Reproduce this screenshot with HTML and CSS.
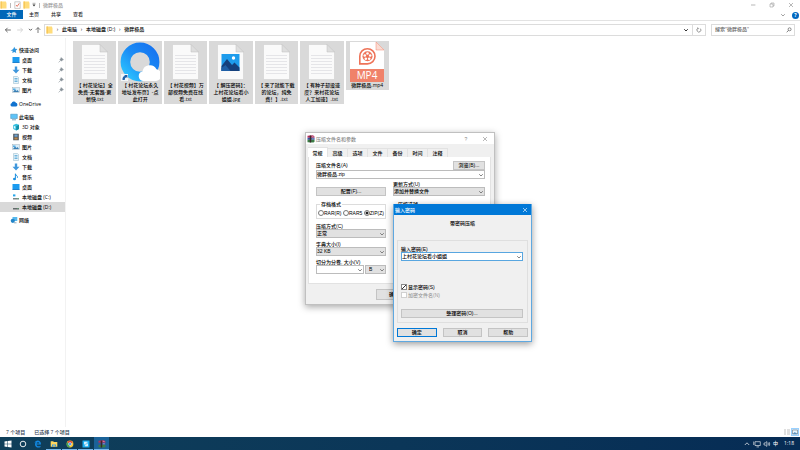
FILE: index.html
```html
<!DOCTYPE html>
<html lang="zh-CN">
  <head>
    <meta charset="UTF-8" />
    <meta name="viewport" content="width=device-width, initial-scale=1.0" />
    <title>微胖极品</title>
    <link rel="stylesheet" href="styles.css">
  </head>
  <body>
    <!-- shared icons -->
    <svg class="defs" aria-hidden="true">
      <linearGradient id="gBlue" x1="0" y1="1" x2="1" y2="0">
        <stop offset="0" stop-color="#2cc3ff" />
        <stop offset="0.5" stop-color="#1a8cf5" />
        <stop offset="1" stop-color="#1673f0" />
      </linearGradient>
      <symbol id="folder" viewBox="0 0 7 8">
        <path d="M0.5 0.5h5.5v1h0.5v6h-6z" fill="#ffdc7a" />
        <path d="M0.5 0.5h1.5v7h-1.5z" fill="#f7c85a" />
      </symbol>
      <symbol id="chev" viewBox="0 0 6 6">
        <path d="M1.2 2.2l1.8 1.8l1.8-1.8" fill="none" stroke="currentColor" stroke-width="0.8" />
      </symbol>
      <symbol id="close" viewBox="0 0 6 6">
        <path d="M1 1l4 4M5 1l-4 4" stroke="currentColor" stroke-width="0.6" />
      </symbol>
      <symbol id="pin" viewBox="0 0 6 6">
        <path d="M3.2 0.6l2.2 2.2l-1 0.2l-1 1.2l-1.6-1.6l1.2-1zM2.2 3.8l-1.6 1.6" fill="#8a939b" stroke="#8a939b" stroke-width="0.6" />
      </symbol>
      <symbol id="desktop" viewBox="0 0 8 8">
        <rect x="0.5" y="1" width="7" height="5.6" fill="#1b9bf0" />
        <path d="M0.5 6h7v0.8h-7z" fill="#0a6fc2" />
      </symbol>
      <symbol id="download" viewBox="0 0 8 8">
        <path d="M2.8 0.5h2.4v3.3h2.3l-3.5 3.7l-3.5-3.7h2.3z" fill="#3f97dc" />
      </symbol>
      <symbol id="doc" viewBox="0 0 8 8">
        <path d="M1.5 0.5h4l1 1v6h-5z" fill="#e9f4fa" stroke="#8fb4c8" stroke-width="0.5" />
        <path d="M2.5 2.5h3M2.5 4h3M2.5 5.5h3" stroke="#3e9ad0" stroke-width="0.7" />
      </symbol>
      <symbol id="picture" viewBox="0 0 8 8">
        <rect x="0.6" y="1.6" width="6.8" height="4.8" fill="#d9edf8" stroke="#9fb0bb" stroke-width="0.5" />
        <path d="M1 6l2-2.4l1.5 1.3l1-0.8l1.5 1.9z" fill="#3a7fb5" />
        <path d="M1 2.5h2.5v1.5h-2.5z" fill="#55aee6" />
      </symbol>
      <symbol id="drive" viewBox="0 0 8 8">
        <path d="M1 5h6v1.5h-6z" fill="#63696b" />
        <path d="M5.3 5.5h1.2v0.6h-1.2z" fill="#5fe07a" />
      </symbol>
      <symbol id="txt" viewBox="0 0 27 36">
        <path d="M0.5 0.5h18.5l7.5 7.5v27.5h-26z" fill="#fafafa" stroke="#d0d0d0" stroke-width="0.6" />
        <path d="M19 0.5v7.5h7.5z" fill="#dedede" stroke="#bdbdbd" stroke-width="0.5" />
        <path d="M3 11.5h21M3 14.5h21M3 17.5h21M3 20.5h21M3 23.5h21M3 26.5h21M3 29.5h21" stroke="#e2e2e5" stroke-width="0.9" />
      </symbol>
      <symbol id="rar" viewBox="0 0 8 8">
        <path d="M0.5 0.8l5.5-0.5l1.5 1.2v1.3h-7z" fill="#b5305f" />
        <path d="M0.5 2.8h7v2h-7z" fill="#3555a8" />
        <path d="M0.5 4.8h7v2l-1 0.8l-6-0.4z" fill="#3c7d46" />
        <path d="M2.7 0.5h1.5v7h-1.5z" fill="#3c2a2a" />
        <path d="M4.8 1.2l1.8 0.5M4.8 3.8h2" stroke="#e8d6da" stroke-width="0.5" />
      </symbol>
    </svg>

    <div class="explorer">
      <header class="titlebar">
        <svg class="ico"><use href="#folder" /></svg>
        <span class="sep"></span>
        <svg class="ico" viewBox="0 0 7 8"><path d="M0.8 0.8h5.4v6.6h-5.4z" fill="#fff" stroke="#999" stroke-width="0.5" /><path d="M2 4l1.2 1.4l2-3" fill="none" stroke="#e0573c" stroke-width="0.8" /></svg>
        <svg class="ico"><use href="#folder" /></svg>
        <svg class="caret" viewBox="0 0 4 6"><path d="M0.5 2.5h3l-1.5 2z" fill="#333" /><path d="M0.5 1.3h3" stroke="#333" stroke-width="0.4" /></svg>
        <span class="sep"></span>
        <span class="title-text">微胖极品</span>
        <div class="window-btns">
          <button aria-label="最小化"><svg viewBox="0 0 6 6"><path d="M1 3h4.4" stroke="#888" stroke-width="0.6" /></svg></button>
          <button aria-label="还原"><svg viewBox="0 0 6 6"><path d="M1 2h3v3h-3zM2 2v-1h3v3h-1" fill="none" stroke="#888" stroke-width="0.5" /></svg></button>
          <button aria-label="关闭"><svg><use href="#close" /></svg></button>
        </div>
      </header>

      <nav class="ribbon">
        <button class="tab-file">文件</button>
        <button>主页</button>
        <button>共享</button>
        <button>查看</button>
        <div class="ribbon-right">
          <svg class="small"><use href="#chev" /></svg>
          <button class="help" aria-label="帮助">?</button>
        </div>
      </nav>

      <div class="address-row">
        <div class="arrows">
          <svg viewBox="0 0 8 8"><path d="M6.8 4h-5.4M3.6 1.8l-2.2 2.2l2.2 2.2" fill="none" stroke="#333" stroke-width="0.7" /></svg>
          <svg viewBox="0 0 8 8"><path d="M1.2 4h5.4M4.4 1.8l2.2 2.2l-2.2 2.2" fill="none" stroke="#c4c4c4" stroke-width="0.7" /></svg>
          <svg class="tiny"><use href="#chev" /></svg>
          <svg viewBox="0 0 8 8"><path d="M4 7v-5.4M1.8 3.8l2.2-2.2l2.2 2.2" fill="none" stroke="#444" stroke-width="0.7" /></svg>
        </div>
        <div class="address">
          <svg class="ico"><use href="#folder" /></svg>
          <span class="crumb-sep">›</span>
          <a href="#">此电脑</a>
          <span class="crumb-sep">›</span>
          <a href="#">本地磁盘 (D:)</a>
          <span class="crumb-sep">›</span>
          <a href="#">微胖极品</a>
          <svg class="small push"><use href="#chev" /></svg>
          <button class="refresh" aria-label="刷新"><svg viewBox="0 0 6 6"><path d="M4.3 1.6a2 2 0 1 1-2.4-0.3M1.2 0.8l1.1 0.4l-0.5 1.2" fill="none" stroke="#555" stroke-width="0.6" /></svg></button>
        </div>
        <div class="search">
          <input type="search" aria-label="搜索" placeholder="搜索&quot;微胖极品&quot;" />
          <svg viewBox="0 0 6 6"><circle cx="3.6" cy="2.3" r="1.5" fill="none" stroke="#444" stroke-width="0.6" /><path d="M2.5 3.4l-1.8 1.8" stroke="#444" stroke-width="0.7" /></svg>
        </div>
      </div>

      <main class="content">
        <aside class="sidebar">
          <ul class="quick">
            <li class="top"><svg viewBox="0 0 8 8"><path d="M4.3 0.8l0.9 2l2.2 0.3l-1.6 1.6l0.4 2.3l-1.9-1.1l-2 1.1l0.4-2.3h-2.2l2.7-1.8z" fill="#2f95dd" /></svg><a href="#">快速访问</a></li>
            <li><svg><use href="#desktop" /></svg><a href="#">桌面</a><svg class="pin"><use href="#pin" /></svg></li>
            <li><svg><use href="#download" /></svg><a href="#">下载</a><svg class="pin"><use href="#pin" /></svg></li>
            <li><svg><use href="#doc" /></svg><a href="#">文档</a><svg class="pin"><use href="#pin" /></svg></li>
            <li><svg><use href="#picture" /></svg><a href="#">图片</a><svg class="pin"><use href="#pin" /></svg></li>
          </ul>
          <ul>
            <li class="top"><svg viewBox="0 0 8 8"><path d="M1.8 6.4a1.6 1.6 0 0 1-0.2-3.1a2.3 2.3 0 0 1 4.3-0.5a1.9 1.9 0 0 1 0.4 3.6z" fill="#1173cf" /></svg><a href="#">OneDrive</a></li>
          </ul>
          <ul>
            <li class="top"><svg viewBox="0 0 8 8"><path d="M0.7 1.2h6.6v4.3h-6.6z" fill="#5ec3f7" stroke="#3f89b5" stroke-width="0.5" /><path d="M2 6.8h4" stroke="#5a8aa8" stroke-width="0.8" /></svg><a href="#">此电脑</a></li>
            <li><svg viewBox="0 0 8 8"><path d="M1.2 2l3-1.3l2.8 1.1v4.3l-2.8 1.4l-3-1.4z" fill="#35bfe0" /><path d="M4.2 3.2l2.8-1.4v4.3l-2.8 1.4z" fill="#138fa8" /><path d="M2 3l1.4 0.6v2.2l-1.4-0.6z" fill="#dff8ff" /></svg><a href="#">3D 对象</a></li>
            <li><svg viewBox="0 0 8 8"><path d="M1.2 0.8h5.6v6.4h-5.6z" fill="#4d545c" /><path d="M2.4 1.4h3.2v2.4h-3.2z" fill="#6fa3d0" /><path d="M2.4 4.4h3.2v2.2h-3.2z" fill="#c08a4c" /></svg><a href="#">视频</a></li>
            <li><svg><use href="#picture" /></svg><a href="#">图片</a></li>
            <li><svg><use href="#doc" /></svg><a href="#">文档</a></li>
            <li><svg><use href="#download" /></svg><a href="#">下载</a></li>
            <li><svg viewBox="0 0 8 8"><path d="M3.4 0.6v5M3.4 1c0.4 1.6 2.6 1.6 2 3.8" fill="none" stroke="#1b8fe0" stroke-width="1" /><ellipse cx="2.5" cy="6" rx="1.5" ry="1.2" fill="#1b8fe0" /></svg><a href="#">音乐</a></li>
            <li><svg><use href="#desktop" /></svg><a href="#">桌面</a></li>
            <li><svg viewBox="0 0 8 8"><path d="M1 1.4h2.4v2h-2.4z" fill="#24a5e8" /><path d="M1 5h6v1.5h-6z" fill="#7c8588" /><path d="M5 5.4h1.4v0.6h-1.4z" fill="#5fe07a" /></svg><a href="#">本地磁盘 (C:)</a></li>
            <li class="selected"><svg><use href="#drive" /></svg><a href="#">本地磁盘 (D:)</a></li>
          </ul>
          <ul>
            <li class="top"><svg viewBox="0 0 8 8"><path d="M2.5 1h4.8v4h-4.8z" fill="#55b8ee" /><circle cx="2.8" cy="4.8" r="2.1" fill="#2385c8" /><path d="M4 6.8h2.5" stroke="#5e89a5" stroke-width="0.7" /></svg><a href="#">网络</a></li>
          </ul>
        </aside>

        <section class="files">
          <figure class="tile">
            <div class="thumb"><svg class="sheet"><use href="#txt" /></svg></div>
            <figcaption>【 村花论坛】全<br />免费-无套路-更<br />新快.txt</figcaption>
          </figure>
          <figure class="tile">
            <div class="thumb">
              <svg class="big" viewBox="0 0 40 40">
                <circle cx="20" cy="20" r="14.6" fill="none" stroke="url(#gBlue)" stroke-width="9.6" />
                <path d="M23 39a5 5 0 0 1-0.5-9.8a7.5 7.5 0 0 1 14-2a6 6 0 0 1-0.5 11.8z" fill="#fff" />
                <rect x="1" y="32" width="7" height="7" fill="#f2f6fa" />
                <path d="M2.5 38q-0.3-3.600 2.5-3.900l-0.8-1.2h3.2v3.2l-1.2-0.9q-1.6 0.4-1.5 2.8z" fill="#1d5fa8" />
              </svg>
            </div>
            <figcaption>【 村花论坛永久<br />地址发布页】-点<br />此打开</figcaption>
          </figure>
          <figure class="tile">
            <div class="thumb"><svg class="sheet"><use href="#txt" /></svg></div>
            <figcaption>【 村花视频】万<br />部视频免费在线<br />看.txt</figcaption>
          </figure>
          <figure class="tile">
            <div class="thumb">
              <svg class="sheet" viewBox="0 0 27 36">
                <path d="M0.5 0.5h18.5l7.5 7.5v27.5h-26z" fill="#fafafa" stroke="#d0d0d0" stroke-width="0.6" />
                <path d="M19 0.5v7.5h7.5z" fill="#dedede" stroke="#bdbdbd" stroke-width="0.5" />
                <rect x="4.500" y="10" width="18" height="17" fill="#1e9cec" />
                <path d="M4.500 22l5.500-7l5 6l2.500-2.500l5 5v3.500h-18z" fill="#15407c" />
                <path d="M4.500 24l4-3l5 6h-9z" fill="#1f5fa6" />
                <circle cx="16.500" cy="14" r="1.700" fill="#fff" />
              </svg>
            </div>
            <figcaption>【 解压密码】：<br />上村花论坛看小<br />姐姐.jpg</figcaption>
          </figure>
          <figure class="tile">
            <div class="thumb"><svg class="sheet"><use href="#txt" /></svg></div>
            <figcaption>【 来了就能下载<br />的论坛，纯免<br />费！】.txt</figcaption>
          </figure>
          <figure class="tile">
            <div class="thumb"><svg class="sheet"><use href="#txt" /></svg></div>
            <figcaption>【 有种子却没速<br />度？来村花论坛<br />人工加速】.txt</figcaption>
          </figure>
          <figure class="tile">
            <div class="thumb">
              <svg class="big" viewBox="0 0 40 40">
                <path d="M3 0h26l8 8v31h-34z" fill="#fff" />
                <path d="M29 0v8h8z" fill="#fbdcd3" stroke="#f0876c" stroke-width="0.5" />
                <path d="M3 27h34v13h-34z" fill="#f0826a" />
                <path d="M12.800 21.500v-7.200a7.600 7.600 0 1 1 7.600 7.600h-7.600z" fill="none" stroke="#ee7358" stroke-width="1.600" />
                <circle cx="20.500" cy="14.300" r="5" fill="#ee7358" />
                <g fill="#fff"><circle cx="20.500" cy="11.500" r="1.300" /><circle cx="23.200" cy="13.500" r="1.300" /><circle cx="22.200" cy="16.700" r="1.300" /><circle cx="18.800" cy="16.700" r="1.300" /><circle cx="17.800" cy="13.500" r="1.300" /></g>
                <text x="20" y="37" text-anchor="middle" class="mp4">MP4</text>
              </svg>
            </div>
            <figcaption>微胖极品.mp4</figcaption>
          </figure>
        </section>
      </main>

      <footer class="status">
        <span>7 个项目</span>
        <span>已选择 7 个项目</span>
        <div class="views">
          <button aria-label="详细信息"><svg viewBox="0 0 8 8"><path d="M1 2h2M4 2h3M1 4h2M4 4h3M1 6h2M4 6h3" stroke="#999" stroke-width="0.6" /></svg></button>
          <button class="on" aria-label="大图标"><svg viewBox="0 0 8 8"><path d="M1.500 2h5v4h-5z" fill="#e8f4fb" stroke="#666" stroke-width="0.500" /><path d="M1.700 5.800l2-1.600l2.800 1.600z" fill="#3a7fb5" /></svg></button>
        </div>
      </footer>
    </div>

    <footer class="taskbar">
      <button aria-label="开始"><svg viewBox="0 0 8 8"><path d="M0.5 1.400l2.900-0.400v2.700h-2.900zM3.900 0.900l3.600-0.500v3.300h-3.600zM0.500 4.200h2.900v2.700l-2.900-0.400zM3.900 4.200h3.600v3.300l-3.600-0.500z" fill="#fff" /></svg></button>
      <button aria-label="Cortana"><svg viewBox="0 0 8 8"><circle cx="4" cy="4" r="2.800" fill="none" stroke="#fff" stroke-width="0.900" /></svg></button>
      <button aria-label="Edge"><svg viewBox="0 0 8 8"><path d="M7 4.400h-4.500c0.200 2 2.700 2.200 4 1.300v1.300c-2.400 1.200-5.600 0.300-5.500-2.700c0-1 0.500-1.800 1.300-2.300c-1 0.300-1.500 0.900-1.800 1.600c0.300-4.200 6.700-4.400 6.500 0.800zM2.600 3.400h2.700c0-1.500-2.500-1.500-2.700 0z" fill="#1287e0" /></svg></button>
      <button class="open" aria-label="文件资源管理器"><svg viewBox="0 0 8 8"><path d="M0.7 1.200h2.500l0.600 0.800h3.500v4.800h-6.600z" fill="#ffd65c" /><path d="M2 4.500h4v2.300h-1v-1.200h-2v1.200h-1z" fill="#3f9be0" /></svg></button>
      <button class="open" aria-label="Chrome"><svg viewBox="0 0 8 8"><circle cx="4" cy="4" r="3.400" fill="#f6c62e" /><path d="M1.100 2.300a3.400 3.400 0 0 1 5.800 0l-2.900 1.700z" fill="#e0453a" /><path d="M1.100 2.300l2.900 1.700l-0.600 3.400a3.400 3.400 0 0 1-2.300-5.100z" fill="#3ba757" /><circle cx="4" cy="4" r="1.500" fill="#4286f0" stroke="#fff" stroke-width="0.500" /></svg></button>
      <button class="open" aria-label="迅雷"><svg viewBox="0 0 8 8"><rect x="0.5" y="0.5" width="7" height="7" fill="#18aef2" /><path d="M2.200 1.700h3.300v1h-2v0.900h2.300v2.700h-3v-1h1.800v-0.800h-2.400z" fill="#fff" /></svg></button>
      <button class="open active" aria-label="WinRAR"><svg><use href="#rar" /></svg></button>
      <div class="tray">
        <svg viewBox="0 0 8 8"><path d="M1.800 5l2.200-2.200l2.200 2.200" fill="none" stroke="#fff" stroke-width="0.700" /></svg>
        <svg viewBox="0 0 8 8"><path d="M2 1.700h5.300v3.800h-5.300zM3.500 6.900h2.500M0.700 1.500v3.500" fill="none" stroke="#fff" stroke-width="0.600" /></svg>
        <svg viewBox="0 0 8 8"><path d="M1 3v2h1.200l1.600 1.400v-4.800l-1.600 1.400zM5 2.800q0.900 1.200 0 2.400M6 2q1.600 2 0 4" fill="none" stroke="#fff" stroke-width="0.600" /></svg>
        <span>中</span>
        <time>1:18</time>
      </div>
    </footer>

    <!-- WinRAR: archive name and parameters -->
    <div class="dialog archive">
      <div class="dlg-title">
        <svg><use href="#rar" /></svg>
        <span>压缩文件名和参数</span>
        <button class="push" aria-label="帮助">?</button>
        <button aria-label="关闭"><svg><use href="#close" /></svg></button>
      </div>
      <div class="dlg-tabs">
        <button class="current">常规</button>
        <button>高级</button>
        <button>选项</button>
        <button>文件</button>
        <button>备份</button>
        <button>时间</button>
        <button>注释</button>
      </div>
      <form class="panel">
        <div class="name-row">
          <label for="arcName">压缩文件名(A)</label>
          <button type="button" class="btn browse">浏览(B)...</button>
        </div>
        <div class="combo edit"><input type="text" id="arcName" value="微胖极品.zip" /><svg><use href="#chev" /></svg></div>
        <div class="cols">
          <button type="button" class="btn">配置(F)...</button>
          <div class="field">
            <label for="update">更新方式(U)</label>
            <div class="combo"><select id="update"><option>添加并替换文件</option></select><svg><use href="#chev" /></svg></div>
          </div>
        </div>
        <div class="cols groups">
          <fieldset>
            <legend>存档格式</legend>
            <label><input type="radio" name="fmt" />RAR(R)</label>
            <label><input type="radio" name="fmt" />RAR5</label>
            <label><input type="radio" name="fmt" checked />ZIP(Z)</label>
          </fieldset>
          <fieldset>
            <legend>压缩选项</legend>
          </fieldset>
        </div>
        <div class="cols">
          <div class="stack">
            <div class="field">
              <label for="method">压缩方式(C)</label>
              <div class="combo"><select id="method"><option>正常</option></select><svg><use href="#chev" /></svg></div>
            </div>
            <div class="field">
              <label for="dict">字典大小(I)</label>
              <div class="combo"><select id="dict"><option>32 KB</option></select><svg><use href="#chev" /></svg></div>
            </div>
            <div class="field">
              <label for="volume">切分为分卷, 大小(V)</label>
              <div class="split">
                <div class="combo edit"><input type="text" id="volume" /><svg><use href="#chev" /></svg></div>
                <div class="combo unit"><select aria-label="单位"><option>B</option></select><svg><use href="#chev" /></svg></div>
              </div>
            </div>
          </div>
        </div>
      </form>
      <div class="dlg-footer">
        <button class="btn">确定</button>
      </div>
    </div>

    <!-- password prompt -->
    <div class="dialog password">
      <div class="dlg-title">
        <span>输入密码</span>
        <button class="push" aria-label="关闭"><svg><use href="#close" /></svg></button>
      </div>
      <p class="heading">带密码压缩</p>
      <form class="pw-group">
        <label for="pw">输入密码(E)</label>
        <div class="combo edit focus"><input type="text" id="pw" value="上村花论坛看小姐姐" /><svg><use href="#chev" /></svg></div>
        <div class="checks">
          <label><input type="checkbox" checked />显示密码(S)</label>
          <label class="disabled"><input type="checkbox" disabled />加密文件名(N)</label>
        </div>
        <button type="button" class="btn">整理密码(O)...</button>
      </form>
      <div class="pw-footer">
        <button class="btn default">确定</button>
        <button class="btn">取消</button>
        <button class="btn">帮助</button>
      </div>
    </div>
  </body>
</html>
```

FILE: styles.css
```css
* {
  box-sizing: border-box;
}
body {
  margin: 0;
  height: 100vh;
  display: flex;
  flex-direction: column;
  overflow: hidden;
  background: #fff;
  color: #000;
  font: 500 5px/7px "Open Sans", "Noto Sans CJK SC", sans-serif;
  white-space: nowrap;
}
button,
input,
select {
  margin: 0;
  padding: 0;
  border: none;
  background: none;
  color: inherit;
  font: inherit;
  outline: none;
  appearance: none;
}
a {
  color: inherit;
  text-decoration: none;
}
ul {
  list-style: none;
  margin: 0;
  padding: 0;
}
svg {
  display: block;
  flex: none;
  width: 8px;
  height: 8px;
}
.defs {
  position: absolute;
  width: 0;
  height: 0;
}
.ico {
  width: 7px;
  height: 8px;
}
.small {
  width: 6px;
  height: 6px;
}
.push {
  margin-left: auto;
}

/* explorer window */
.explorer {
  flex: 1;
  min-height: 0;
  display: flex;
  flex-direction: column;
}
.titlebar {
  display: flex;
  align-items: center;
  gap: 2px;
  height: 10px;
}
.sep {
  width: 1px;
  height: 5px;
  margin: 0 1px;
  background: #bbb;
}
.caret {
  width: 4px;
  height: 6px;
}
.title-text {
  color: #999;
}
.window-btns {
  display: flex;
  margin-left: auto;
}
.window-btns button {
  width: 19px;
  display: flex;
  justify-content: center;
  color: #888;
}
.window-btns svg {
  width: 6px;
  height: 6px;
}
.ribbon {
  display: flex;
  height: 11px;
  border-bottom: 1px solid #e3e3e3;
}
.ribbon > button {
  width: 22px;
  height: 9px;
  line-height: 9px;
  color: #222;
}
.ribbon .tab-file {
  width: 23px;
  background: #0067b8;
  color: #fff;
}
.ribbon-right {
  display: flex;
  align-items: center;
  gap: 6px;
  margin-left: auto;
  padding-right: 1px;
  color: #888;
}
.help {
  width: 7px;
  height: 7px;
  border-radius: 50%;
  background: #0067c0;
  color: #fff;
  font-weight: bold;
}
.address-row {
  display: flex;
  align-items: center;
  height: 17px;
  padding: 0 5px 0 4px;
}
.arrows {
  display: flex;
  align-items: center;
  gap: 4px;
  width: 40px;
}
.arrows .tiny {
  width: 5px;
  height: 5px;
  margin-right: -3px;
}
.address {
  flex: 1;
  display: flex;
  align-items: center;
  height: 12px;
  padding-left: 1px;
  border: 1px solid #dcdcdc;
}
.crumb-sep {
  width: 9px;
  text-align: center;
}
.refresh {
  width: 13px;
  height: 10px;
  margin-left: 3px;
  border-left: 1px solid #dcdcdc;
  display: flex;
  align-items: center;
  justify-content: center;
}
.refresh svg,
.search svg {
  width: 6px;
  height: 6px;
}
.search {
  display: flex;
  align-items: center;
  width: 84px;
  height: 12px;
  margin-left: 5px;
  padding: 0 2px 0 3px;
  border: 1px solid #dcdcdc;
}
.search input {
  flex: 1;
  min-width: 0;
}
.search input::placeholder {
  color: #666;
}
.content {
  flex: 1;
  min-height: 0;
  display: flex;
}
.sidebar {
  display: flex;
  flex-direction: column;
  gap: 3px;
  width: 66px;
  padding-top: 7px;
  border-right: 1px solid #f2f2f2;
}
.sidebar li {
  display: flex;
  align-items: center;
  gap: 2px;
  height: 10px;
  padding: 0 1px 0 12px;
}
.sidebar .top {
  gap: 1px;
  padding-left: 10px;
}
.sidebar .quick {
  margin-bottom: 1px;
}
.sidebar .selected {
  background: #d9d9d9;
}
.sidebar .pin {
  width: 6px;
  height: 6px;
  margin-left: auto;
}
.files {
  display: grid;
  grid-template-columns: repeat(7, 1fr);
  align-items: start;
  gap: 2px;
  flex: 1;
  max-width: 323px;
  padding: 3px 0 0 7px;
}
.tile {
  margin: 0;
  padding-bottom: 1px;
  background: #d9d9d9;
  text-align: center;
}
.thumb {
  display: flex;
  align-items: center;
  justify-content: center;
  height: 41px;
}
.thumb .sheet {
  width: 27px;
  height: 36px;
}
.thumb .big {
  width: 40px;
  height: 40px;
}
.mp4 {
  font: 10px "Open Sans", sans-serif;
  fill: #fff;
}
.status {
  display: flex;
  align-items: center;
  height: 10px;
  padding: 0 1px 0 6px;
  color: #2b3a4e;
}
.status span {
  margin-right: 9px;
}
.views {
  display: flex;
  margin-left: auto;
}
.views .on {
  background: #cce8ff;
  outline: 1px solid #99d1ff;
  outline-offset: -1px;
}

/* taskbar */
.taskbar {
  display: flex;
  height: 13px;
  background: linear-gradient(90deg, #0f3f5a, #0b3658 50%, #062c55);
  color: #fff;
}
.taskbar > button {
  width: 15px;
  display: flex;
  align-items: center;
  justify-content: center;
}
.taskbar .open {
  margin-left: 1px;
  border-bottom: 1px solid #76b9ed;
  border-top: 1px solid transparent;
}
.taskbar .active {
  background: #1b6298;
}
.tray {
  display: flex;
  align-items: center;
  gap: 2px;
  margin-left: auto;
  padding-right: 6px;
}
.tray time {
  margin-left: 4px;
}

/* dialogs */
.dialog {
  position: absolute;
  display: flex;
  flex-direction: column;
  background: #f0f0f0;
  font-family: "Liberation Sans", "Noto Sans CJK SC", sans-serif;
  line-height: 6px;
}
.dlg-title {
  display: flex;
  align-items: center;
  height: 11px;
}
.dlg-title button {
  width: 19px;
  display: flex;
  justify-content: center;
}
.dlg-title button svg {
  width: 6px;
  height: 6px;
}
.btn {
  height: 9px;
  background: #e1e1e1;
  border: 1px solid #c4c4c4;
  line-height: 7px;
}
.combo {
  display: flex;
  align-items: center;
  height: 9px;
  background: #e1e1e1;
  border: 1px solid #bcbcbc;
}
.combo.edit {
  background: #fff;
}
.combo.focus {
  border-color: #58a6e0;
}
.combo input,
.combo select {
  flex: 1;
  width: 100%;
  min-width: 0;
  height: 7px;
  line-height: 7px;
}
.combo svg {
  width: 6px;
  height: 6px;
  color: #666;
}
.archive {
  left: 305px;
  top: 132px;
  width: 190px;
  border: 1px solid #c0c0c0;
  box-shadow: 0 2px 7px rgba(0, 0, 0, 0.35);
}
.archive .dlg-title {
  gap: 1px;
  padding-left: 1px;
  background: #fff;
  color: #888;
}
.archive .dlg-title button {
  width: 18px;
}
.dlg-tabs {
  display: flex;
  align-items: flex-end;
  padding: 3px 2px 0;
}
.dlg-tabs button {
  width: 20px;
  height: 9px;
  border: 1px solid #e2e2e2;
  border-bottom: none;
  border-left: none;
}
.dlg-tabs .current {
  height: 10px;
  background: #fff;
}
.panel {
  margin: 0 3px 0 2px;
  padding: 3px 5px 9px 7px;
  background: #fff;
  border: 1px solid #e2e2e2;
  border-top: none;
}
.name-row {
  display: flex;
  align-items: center;
  justify-content: space-between;
  height: 10px;
}
.browse {
  width: 32px;
}
.cols {
  display: grid;
  grid-template-columns: 70px 1fr;
  column-gap: 7px;
  align-items: end;
  margin-top: 2px;
}
.field label {
  display: block;
}
.groups {
  margin: 5px 0 4px;
  align-items: start;
}
fieldset {
  display: flex;
  justify-content: space-between;
  min-width: 0;
  height: 18px;
  margin: 0;
  padding: 1px;
  border: 1px solid #dcdcdc;
}
legend {
  margin-left: 2px;
  padding: 0 1px;
}
fieldset label,
.checks label {
  display: flex;
  align-items: center;
}
input[type="radio"] {
  width: 6px;
  height: 6px;
  border: 1px solid #777;
  border-radius: 50%;
  background: #fff;
}
input[type="radio"]:checked {
  background: radial-gradient(#222 45%, #fff 60%);
}
.stack {
  display: flex;
  flex-direction: column;
  gap: 3px;
}
.split {
  display: flex;
  gap: 1px;
}
.split .edit {
  flex: 1;
  min-width: 0;
}
.unit {
  width: 21px;
  padding-left: 3px;
}
.dlg-footer {
  display: flex;
  padding: 5px 4px 4px 70px;
}
.dlg-footer .btn {
  width: 36px;
  height: 11px;
}
.password {
  left: 393px;
  top: 204px;
  width: 139px;
  border: 1px solid #5fa8e0;
  border-top: none;
  box-shadow: 0 2px 7px rgba(0, 0, 0, 0.4);
}
.password .dlg-title {
  padding-left: 1px;
  background: #0078d7;
  color: #fff;
}
.password .dlg-title button {
  width: 13px;
}
.heading {
  margin: 5px 0 14px;
  text-align: center;
}
.pw-group {
  display: flex;
  flex-direction: column;
  margin: 0 3px;
  padding: 5px 4px 4px 3px;
  border: 1px solid #dfdfdf;
}
.checks {
  display: flex;
  flex-direction: column;
  gap: 2px;
  margin: 23px 0 11px;
}
.checks label {
  gap: 1px;
}
.checks .disabled {
  color: #999;
}
input[type="checkbox"] {
  width: 6px;
  height: 6px;
  border: 1px solid #888;
  background: #fff;
}
input[type="checkbox"]:checked {
  background: linear-gradient(135deg, #fff 40%, #333 40%, #333 60%, #fff 60%);
}
input[type="checkbox"]:disabled {
  border-color: #d0d0d0;
}
.pw-footer {
  display: flex;
  justify-content: space-between;
  gap: 6px;
  padding: 5px 3px 4px;
}
.pw-footer .btn {
  flex: 1;
}
.pw-footer .default {
  border-color: #0078d7;
}
```
